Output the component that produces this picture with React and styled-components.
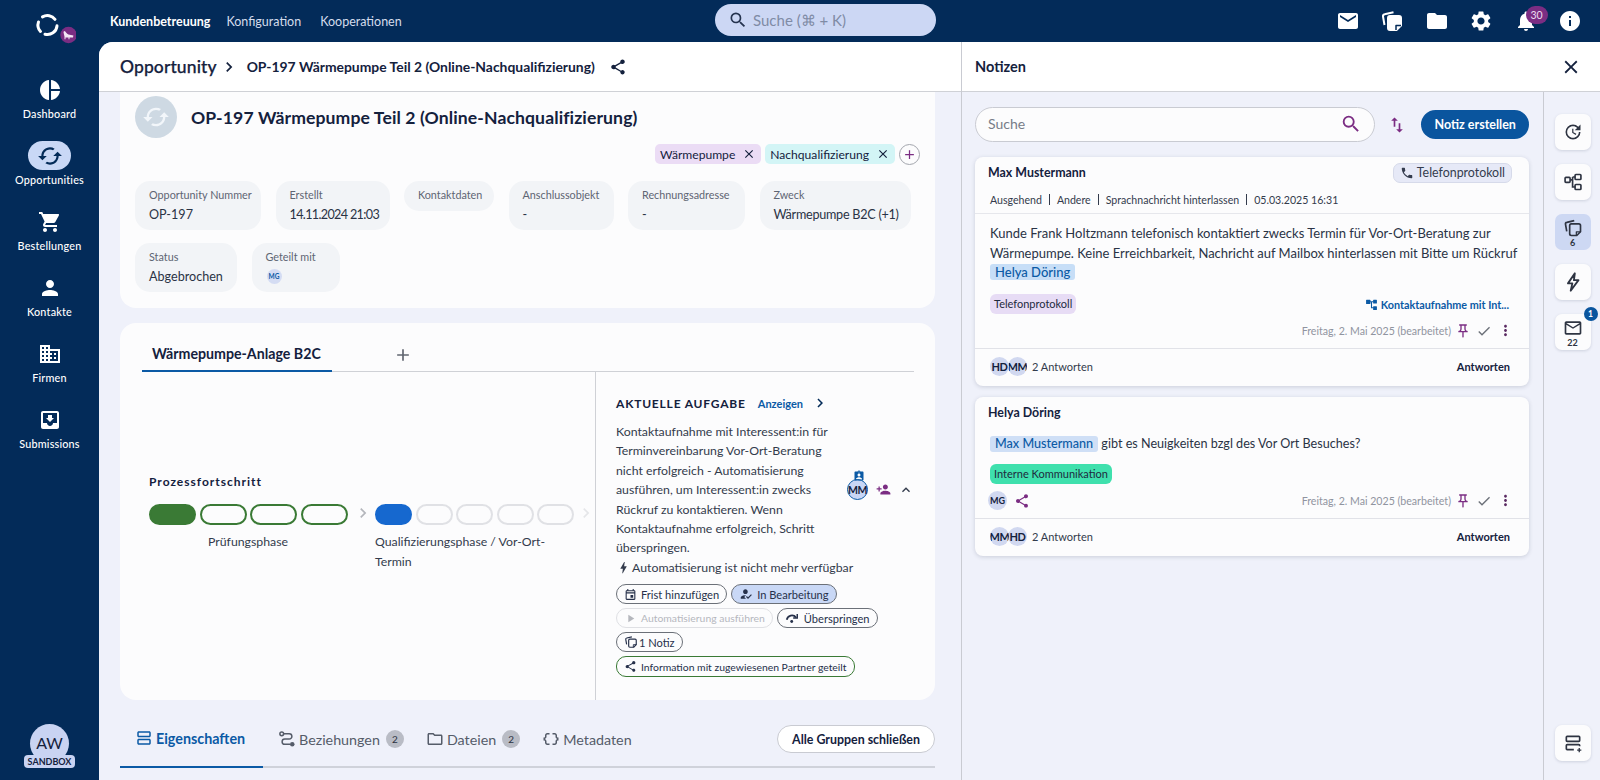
import React from "react";
import styled, { createGlobalStyle } from "styled-components";
import {
  MdPieChart, MdSync, MdShoppingCart, MdPerson, MdDomain, MdMoveToInbox, MdEmail, MdFolder,
  MdSettings, MdNotifications, MdInfo, MdShare, MdSearch, MdClose, MdAdd, MdChevronRight,
  MdSwapVert, MdPhone, MdOutlineUpdate, MdOutlineEmail, MdOutlineViewAgenda,
  MdOutlineFolder, MdDataObject, MdOutlineEvent, MdHowToReg, MdPlayArrow,
  MdOutlinePushPin, MdCheck, MdMoreVert, MdPersonAdd, MdAssignmentInd, MdExpandLess, MdBolt,
} from "react-icons/md";

const navy = "#032b59";
const ink = "#14213d";
const purple = "#7b2d83";
const blue = "#0b5aa5";

const GlobalStyle = createGlobalStyle`
  html, body {
    margin: 0;
    height: 780px;
    overflow: hidden;
    background: ${navy};
    font-family: "Lato", "Liberation Sans", sans-serif;
    color: ${ink};
  }
  * { box-sizing: border-box; }
`;

const Shell = styled.div`
  display: grid;
  grid-template-columns: 99px 1fr;
  width: 1600px;
  height: 780px;
  background: ${navy};
`;

const Sidebar = styled.aside`
  display: flex;
  flex-direction: column;
  align-items: center;
  height: 780px;
  color: #fff;
`;

const LogoBox = styled.div`
  height: 75px;
  padding-top: 9px;
`;

const NavItem = styled.div`
  display: flex;
  flex-direction: column;
  align-items: center;
  width: 99px;
  height: 66px;
  font-size: 10.8px;
  font-weight: 500;
  letter-spacing: 0.2px;
  color: #fff;
  svg { display: block; }
`;

const NavIcon = styled.div`
  display: flex;
  align-items: center;
  justify-content: center;
  width: 43px;
  height: 29px;
  margin-bottom: 3px;
  border-radius: 15px;
  background: ${(p) => (p.$active ? "#c9d8f6" : "transparent")};
  color: ${(p) => (p.$active ? navy : "#fff")};
`;

const SyncIcon = styled(MdSync)`
  transform: rotate(90deg);
`;

const UserBox = styled.div`
  position: relative;
  margin-top: auto;
  margin-bottom: 17px;
  width: 39px;
  height: 39px;
  border-radius: 50%;
  background: #c9d3f2;
  color: ${ink};
  font-size: 16px;
  display: flex;
  justify-content: center;
  padding-top: 10px;
  line-height: 18px;
`;

const SandboxBadge = styled.div`
  position: absolute;
  left: -6px;
  top: 31px;
  width: 51px;
  height: 13px;
  border-radius: 4px;
  background: #c9d3f2;
  font-size: 9px;
  font-weight: 700;
  line-height: 13px;
  text-align: center;
`;

const Main = styled.div`
  display: flex;
  flex-direction: column;
  min-width: 0;
  height: 780px;
`;

const TopBar = styled.header`
  display: grid;
  grid-template-columns: 605px 221px 1fr;
  align-items: center;
  height: 42px;
  padding-left: 11px;
  color: #fff;
`;

const TopLinks = styled.nav`
  display: flex;
  font-size: 12.5px;
`;

const TopLink = styled.span`
  margin-right: ${(p) => p.$mr || 0}px;
  font-weight: ${(p) => (p.$active ? 700 : 400)};
  color: ${(p) => (p.$active ? "#fff" : "#d4dcec")};
`;

const GlobalSearch = styled.div`
  display: flex;
  align-items: center;
  gap: 5px;
  height: 32px;
  margin-top: -2px;
  padding-left: 13px;
  border-radius: 16px;
  background: #ccd7f4;
  color: #7f8ba5;
  font-size: 15px;
  svg { color: #26344f; }
`;

const TopIcons = styled.div`
  display: flex;
  justify-content: flex-end;
  align-items: center;
  gap: 20.4px;
  padding-right: 18px;
  svg { display: block; }
`;

const BellWrap = styled.div`
  position: relative;
`;

const BellBadge = styled.span`
  position: absolute;
  left: 12px;
  top: -3px;
  width: 22px;
  height: 18px;
  border-radius: 9px;
  background: ${purple};
  font-size: 10.5px;
  line-height: 18px;
  text-align: center;
  color: #eadcf0;
`;

const Workspace = styled.div`
  display: grid;
  grid-template-columns: 863px 1fr;
  flex: 1;
  min-height: 0;
  overflow: hidden;
  border-top-left-radius: 14px;
  background: #eff1fa;
`;

const LeftPane = styled.section`
  display: flex;
  flex-direction: column;
  min-height: 0;
  border-right: 1px solid #c9cbd2;
`;

const PaneHead = styled.div`
  display: flex;
  align-items: center;
  flex: none;
  height: 50px;
  background: #fff;
  border-bottom: 1px solid #cfd1d6;
`;

const LeftHead = styled(PaneHead)`
  padding-left: 21px;
  svg { display: block; }
`;

const Crumb = styled.span`
  font-size: 17.5px;
  font-weight: 500;
  letter-spacing: 0.1px;
  -webkit-text-stroke: 0.25px ${ink};
`;

const CrumbArrow = styled(MdChevronRight)`
  margin: 0 8px 0 2px;
`;

const CrumbTitle = styled.span`
  font-size: 13.9px;
  font-weight: 700;
  margin-right: 14px;
`;

const LeftBody = styled.div`
  display: flex;
  flex-direction: column;
  padding: 0 26px 0 21px;
  background: #eff1fa;
`;

const Panel = styled.div`
  background: #fcfcfd;
  width: 815px;
`;

const InfoPanel = styled(Panel)`
  height: 216px;
  padding: 4px 15px 0;
  border-radius: 0 0 16px 16px;
`;

const TitleRow = styled.div`
  display: flex;
  align-items: center;
  gap: 14px;
  height: 42px;
`;

const EntityIcon = styled.div`
  display: flex;
  align-items: center;
  justify-content: center;
  width: 42px;
  height: 42px;
  border-radius: 50%;
  background: #ced9e3;
  color: #f2f6fa;
`;

const EntityTitle = styled.h1`
  margin: 0;
  font-size: 17.6px;
  font-weight: 700;
  letter-spacing: 0.1px;
`;

const TagRow = styled.div`
  display: flex;
  justify-content: flex-end;
  align-items: center;
  gap: 4px;
  height: 22px;
  margin-top: 5px;
`;

const Tag = styled.span`
  display: inline-flex;
  align-items: center;
  gap: 7px;
  height: 20px;
  padding: 0 5px;
  border-radius: 5px;
  font-size: 12.1px;
  background: ${(p) => p.$bg};
  svg { display: block; }
`;

const RoundAdd = styled.span`
  display: flex;
  align-items: center;
  justify-content: center;
  width: 21px;
  height: 21px;
  border: 1px solid #a3a6ad;
  border-radius: 50%;
  color: ${purple};
`;

const TileWrap = styled.div`
  display: flex;
  flex-wrap: wrap;
  gap: 13px 14.5px;
  margin-top: 16px;
`;

const Tile = styled.div`
  width: ${(p) => p.$w}px;
  height: ${(p) => (p.$short ? "30px" : "49px")};
  padding: 7px 14px 0;
  border-radius: 15px;
  background: #f2f4f7;
`;

const TileLabel = styled.div`
  font-size: 10.8px;
  line-height: 14px;
  color: #5e6573;
  white-space: nowrap;
`;

const TileValue = styled.div`
  margin-top: 5px;
  font-size: 12.6px;
  letter-spacing: ${(p) => p.$track || 0}px;
  line-height: 16px;
  color: #2a3345;
  white-space: nowrap;
`;

const TinyAvatar = styled.span`
  display: flex;
  align-items: center;
  justify-content: center;
  width: 15px;
  height: 15px;
  margin: 5px 0 0 1px;
  border-radius: 50%;
  background: #d4dcf3;
  color: ${blue};
  font-size: 6.5px;
  font-weight: 700;
`;

const ProcessPanel = styled(Panel)`
  height: 377px;
  margin-top: 15px;
  padding-top: 16px;
  border-radius: 16px;
`;

const TabLine = styled.div`
  display: flex;
  align-items: center;
  height: 33px;
  margin: 0 21px 0 22px;
  border-bottom: 1px solid #cfd1d6;
`;

const ProcessTab = styled.div`
  align-self: stretch;
  width: 190px;
  margin-bottom: -1px;
  padding: 6px 0 0 10px;
  border-bottom: 2px solid ${blue};
  font-size: 14.2px;
  font-weight: 700;
`;

const TabPlus = styled.span`
  display: flex;
  margin-left: 61px;
  color: #606570;
`;

const ProcessBody = styled.div`
  display: grid;
  grid-template-columns: 476px 1fr;
  height: 328px;
`;

const Progress = styled.div`
  display: flex;
  flex-direction: column;
  justify-content: flex-start;
  padding: 102px 0 0 29px;
  border-right: 1px solid #cfd1d6;
`;

const ProgressTitle = styled.div`
  font-size: 12px;
  font-weight: 700;
  letter-spacing: 1px;
  line-height: 16px;
`;

const Phases = styled.div`
  display: flex;
  margin-top: 14px;
`;

const Phase = styled.div`
  width: 198px;
`;

const PillRow = styled.div`
  display: flex;
  gap: ${(p) => p.$gap}px;
  height: 21px;
  align-items: center;
`;

const Pill = styled.span`
  flex: none;
  width: ${(p) => p.$w}px;
  height: 21px;
  border-radius: 10.5px;
  border: 2px solid ${(p) => p.$c};
  background: ${(p) => (p.$fill ? p.$c : "transparent")};
`;

const PhaseLabel = styled.div`
  margin-top: 7px;
  font-size: 12.3px;
  line-height: 19.5px;
  color: #333b4c;
  text-align: ${(p) => p.$align};
`;

const Chevron = styled.span`
  flex: none;
  align-self: flex-start;
  display: flex;
  color: ${(p) => p.$c};
  width: 20px;
  margin: -1px ${(p) => p.$mr || 0}px 0 ${(p) => p.$ml || 0}px;
`;

const Task = styled.div`
  position: relative;
  padding: 21px 0 0 20px;
`;

const TaskHead = styled.div`
  display: flex;
  align-items: center;
  height: 20px;
`;

const TaskTitle = styled.span`
  font-size: 12px;
  font-weight: 700;
  letter-spacing: 0.8px;
`;

const TaskLink = styled.span`
  margin: 0 8px 0 12px;
  font-size: 11px;
  font-weight: 700;
  color: ${blue};
`;

const TaskLine = styled.div`
  display: grid;
  grid-template-columns: 232px auto;
  align-items: center;
  margin-top: 9px;
`;

const TaskText = styled.div`
  font-size: 12.3px;
  line-height: 19.4px;
  color: #333b4c;
`;

const Assign = styled.div`
  display: flex;
  align-items: center;
  margin-left: -1px;
  color: ${purple};
  svg { display: block; }
`;

const AssignAvatar = styled.span`
  position: relative;
  display: flex;
  align-items: center;
  justify-content: center;
  width: 21px;
  height: 21px;
  margin-right: 8px;
  border: 1px solid ${blue};
  border-radius: 50%;
  background: #c9d6f5;
  color: ${ink};
  font-size: 10.5px;
  font-weight: 700;
  letter-spacing: -0.3px;
`;

const AssignBadge = styled.span`
  position: absolute;
  top: -10px;
  left: 5px;
  color: ${blue};
`;

const CollapseIcon = styled(MdExpandLess)`
  margin-left: 7px;
  color: #333b4c;
`;

const Automation = styled.div`
  display: flex;
  align-items: center;
  gap: 1px;
  font-size: 12.3px;
  line-height: 19.4px;
  color: #333b4c;
`;

const Actions = styled.div`
  display: flex;
  flex-wrap: wrap;
  gap: 4px;
  margin-top: 7px;
  width: 290px;
`;

const Action = styled.span`
  display: inline-flex;
  align-items: center;
  gap: ${(p) => p.$gap || 4}px;
  height: ${(p) => p.$h || 20}px;
  padding: 0 7px;
  border-radius: 10px;
  border: 1px solid ${(p) => p.$line || "#6b7078"};
  background: ${(p) => p.$bg || "transparent"};
  color: ${(p) => p.$c || "#26304a"};
  font-size: ${(p) => p.$fs || 11.1}px;
  white-space: nowrap;
  svg { display: block; }
`;

const BottomTabs = styled.div`
  display: flex;
  align-items: center;
  position: relative;
  height: 53px;
  margin-top: 15px;
  width: 815px;
  border-bottom: 2px solid #cfd2da;
`;

const BottomTab = styled.div`
  display: flex;
  align-items: center;
  gap: 3px;
  align-self: stretch;
  margin-bottom: -2px;
  margin-right: ${(p) => p.$mr}px;
  padding-left: ${(p) => p.$pl || 0}px;
  padding-bottom: 5px;
  width: ${(p) => (p.$active ? "143px" : "auto")};
  border-bottom: ${(p) => (p.$active ? `2px solid ${blue}` : "0")};
  font-size: 14.3px;
  font-weight: ${(p) => (p.$active ? 700 : 400)};
  color: ${(p) => (p.$active ? blue : "#555c69")};
  svg { display: block; }
`;

const Count = styled.span`
  display: flex;
  align-items: center;
  justify-content: center;
  width: 18px;
  height: 18px;
  margin-left: 3px;
  border-radius: 50%;
  background: #b9bcc5;
  color: #2c3342;
  font-size: 10px;
`;

const CloseGroups = styled.button`
  margin-left: auto;
  margin-bottom: 3px;
  width: 158px;
  height: 28px;
  border: 1px solid #c9cbd2;
  border-radius: 14px;
  background: #fff;
  color: ${ink};
  font: 700 12.4px "Lato", sans-serif;
`;

const NotesPane = styled.section`
  display: flex;
  flex-direction: column;
  min-height: 0;
`;

const NotesHead = styled(PaneHead)`
  justify-content: space-between;
  padding: 0 18px 0 13px;
  font-size: 14.5px;
  font-weight: 700;
`;

const NotesBody = styled.div`
  display: grid;
  grid-template-columns: 582px 1fr;
  flex: 1;
  min-height: 0;
`;

const NotesColumn = styled.div`
  display: flex;
  flex-direction: column;
  gap: 11px;
  padding: 15px 14px 0 13px;
  border-right: 1px solid #c9cbd2;
`;

const NotesTools = styled.div`
  display: flex;
  align-items: center;
  height: 35px;
  margin-bottom: 4px;
`;

const NoteSearch = styled.div`
  display: flex;
  align-items: center;
  justify-content: space-between;
  width: 402px;
  height: 35px;
  padding: 0 12px 2px;
  border: 1px solid #c9cbd2;
  border-radius: 18px;
  background: #fcfcfd;
  color: #777c88;
  font-size: 14px;
  svg { color: ${purple}; display: block; }
`;

const SortIcon = styled.span`
  display: flex;
  margin: 0 14px 0 12px;
  color: ${purple};
`;

const CreateNote = styled.button`
  width: 108px;
  height: 29px;
  border: 0;
  border-radius: 15px;
  background: #0a559e;
  color: #fff;
  font: 700 12.5px "Lato", sans-serif;
`;

const NoteCard = styled.article`
  flex: none;
  height: ${(p) => p.$h}px;
  border-radius: 8px;
  background: #fcfcfd;
  box-shadow: 0 1px 4px rgba(40, 50, 80, 0.18);
`;

const NoteHead = styled.div`
  display: flex;
  align-items: center;
  justify-content: space-between;
  height: 31px;
  padding: 0 17px 0 13px;
  font-size: 12.4px;
  font-weight: 700;
`;

const ProtocolChip = styled.span`
  display: inline-flex;
  align-items: center;
  gap: 3px;
  height: 20px;
  padding: 0 6px;
  border: 1px solid #d6daea;
  border-radius: 7px;
  background: #e6e9f7;
  font-size: 12.4px;
  font-weight: 400;
  color: #343c4e;
`;

const MetaRow = styled.div`
  display: flex;
  align-items: center;
  height: 26px;
  padding: 0 15px 2px;
  border-bottom: 1px solid #e6e7ec;
  font-size: 10.6px;
  color: #333b4c;
`;

const MetaSep = styled.i`
  width: 1px;
  height: 11px;
  margin: 0 7px;
  background: #333b4c;
`;

const NoteText = styled.div`
  padding: ${(p) => p.$pad || "10px 15px 0"};
  font-size: ${(p) => p.$fs || 13}px;
  line-height: 19.6px;
  color: #2a3345;
  white-space: nowrap;
`;

const Mention = styled.span`
  display: inline-block;
  height: 16px;
  padding: 0 5px;
  border-radius: 3px;
  background: ${(p) => p.$bg};
  color: ${blue};
  font-weight: 500;
  line-height: 16px;
`;

const NoteTagRow = styled.div`
  display: flex;
  align-items: center;
  justify-content: space-between;
  margin-top: ${(p) => p.$mt}px;
  padding: 0 20px 0 15px;
`;

const NoteTag = styled.span`
  display: inline-flex;
  align-items: center;
  height: 20px;
  padding: 0 4px;
  border-radius: 6px;
  background: ${(p) => p.$bg};
  font-size: 11px;
  color: #1e2a3e;
`;

const TaskRef = styled.span`
  display: inline-flex;
  align-items: center;
  gap: 3px;
  margin-top: 1px;
  font-size: 10.8px;
  font-weight: 700;
  color: ${blue};
  svg { display: block; }
`;

const StatusRow = styled.div`
  display: flex;
  align-items: center;
  height: 35px;
  padding: 0 15px 0 13px;
  border-bottom: 1px solid #e1e2e8;
  svg { display: block; }
`;

const StatusDate = styled.span`
  margin: 0 4px 0 auto;
  font-size: 10.6px;
  color: #9094a0;
`;

const StatusIcon = styled.span`
  display: flex;
  margin-left: ${(p) => p.$ml || 0}px;
  color: ${(p) => p.$c || "#6b7078"};
`;

const PersonDot = styled.span`
  display: flex;
  align-items: center;
  justify-content: center;
  width: 19px;
  height: 19px;
  border-radius: 50%;
  margin-right: 4px;
  background: #d1d8f0;
  font-size: 9px;
  font-weight: 700;
`;

const NoteFoot = styled.div`
  display: flex;
  align-items: center;
  height: 36px;
  padding: 0 19px 0 15px;
  font-size: 11px;
  color: #333b4c;
`;

const StackDot = styled.span`
  position: relative;
  z-index: ${(p) => (p.$front ? 1 : 0)};
  display: flex;
  align-items: center;
  justify-content: center;
  flex: none;
  width: 19px;
  height: 19px;
  margin-left: ${(p) => (p.$front ? 0 : -1)}px;
  margin-right: ${(p) => (p.$front ? 0 : 5)}px;
  border-radius: 50%;
  background: #d1d8f0;
  color: ${ink};
  font-size: 11px;
  font-weight: 700;
  letter-spacing: -0.3px;
  overflow: hidden;
`;

const ReplyLink = styled.span`
  margin-left: auto;
  font-weight: 700;
  color: ${ink};
`;

const Rail = styled.div`
  display: flex;
  flex-direction: column;
  align-items: center;
  gap: 14px;
  padding: 22px 0 19px 1px;
`;

const RailButton = styled.div`
  position: relative;
  display: flex;
  flex-direction: column;
  align-items: center;
  justify-content: center;
  flex: none;
  width: 36px;
  height: 36px;
  margin-top: ${(p) => (p.$bottom ? "auto" : "0")};
  border-radius: 7px;
  background: ${(p) => (p.$active ? "#cdd8f3" : "#fcfcfd")};
  box-shadow: ${(p) => (p.$active ? "none" : "0 1px 3px rgba(40,50,80,.16)")};
  color: #2e3442;
  font-size: 9px;
  line-height: 9px;
  font-weight: 700;
  svg { display: block; }
`;

const RailBadge = styled.span`
  position: absolute;
  top: -7px;
  right: -7px;
  width: 14px;
  height: 14px;
  border-radius: 50%;
  background: #0a559e;
  color: #fff;
  font-size: 8.5px;
  line-height: 14px;
  text-align: center;
`;

const Logo = () => (
  <svg width="52" height="40" viewBox="0 0 52 40">
    <g fill="none" stroke="#fff" strokeWidth="3" strokeLinecap="round">
      <path d="M18.500 7.900A9.500 9.500 0 0 1 31 10.300" />
      <path d="M33 16.800A9.500 9.500 0 0 1 21 25.200" />
      <path d="M16.500 22.500A9.500 9.500 0 0 1 14.500 13" />
    </g>
    <circle cx="44.500" cy="26" r="8.200" fill={purple} />
    <path d="M40 22c2 .3 2.600 3 4.400 3.600l5 1-.4 1.900h-3.500v1.800h-1v-1.800h-3v1.800h-1v-2.500l-1-4.500z" fill="#f4e6f5" />
  </svg>
);

const NotesGlyph = ({ filled, size = 22 }) => (
  <svg width={size} height={size} viewBox="0 0 24 24" fill="none" stroke="currentColor" strokeWidth="2" strokeLinejoin="round">
    <path d="M4.500 16L3 7.500A2 2 0 0 1 4.600 5.200L13.500 3.200" />
    <path
      d="M10 7h9a2 2 0 0 1 2 2v7.500L16.500 21H10a2 2 0 0 1-2-2V9a2 2 0 0 1 2-2z"
      fill={filled ? "currentColor" : "none"}
    />
    <path d="M16 21v-4.500h5" stroke={filled ? navy : "currentColor"} strokeWidth="1.500" />
  </svg>
);

const BranchGlyph = ({ size = 22 }) => (
  <svg width={size} height={size} viewBox="0 0 24 24" fill="none" stroke="currentColor" strokeWidth="2">
    <rect x="2.500" y="6.500" width="6" height="6" rx="1" />
    <rect x="14.500" y="3" width="7" height="6" rx="1" />
    <rect x="14.500" y="15" width="7" height="6" rx="1" />
    <path d="M8.500 9.500h3M11.500 6v12h3M11.500 6h3" />
  </svg>
);

const TaskRefGlyph = () => (
  <svg width="13" height="13" viewBox="0 0 24 24" fill="currentColor">
    <rect x="2" y="3" width="8" height="8" rx="1" />
    <rect x="15" y="3" width="7" height="7" rx="1" />
    <rect x="15" y="15" width="7" height="7" rx="1" />
    <path d="M9 6h7v2H13v9h3v2h-5V8H9z" />
  </svg>
);

const SkipGlyph = () => (
  <svg width="14" height="14" viewBox="0 0 24 24" fill="none" stroke="currentColor" strokeWidth="3">
    <path d="M3 15a9 9 0 0 1 16-4" />
    <path d="M21 5v7h-7" strokeWidth="2.500" />
    <circle cx="11.500" cy="18" r="2.500" fill="currentColor" stroke="none" />
  </svg>
);

const RouteGlyph = () => (
  <svg width="18" height="18" viewBox="0 0 24 24" fill="none" stroke="currentColor" strokeWidth="2">
    <circle cx="5" cy="5" r="2.500" />
    <path d="M7.500 5H15a3.500 3.500 0 0 1 0 7H9a3.500 3.500 0 0 0 0 7h7" />
    <circle cx="19" cy="19" r="3" fill="currentColor" stroke="none" />
  </svg>
);

const GroupAddGlyph = () => (
  <svg width="20" height="20" viewBox="0 0 24 24" fill="none" stroke="currentColor" strokeWidth="2">
    <rect x="4" y="4" width="16" height="6" rx="1" />
    <path d="M13 20H5a1 1 0 0 1-1-1v-4a1 1 0 0 1 1-1h14a1 1 0 0 1 1 1v1" />
    <path d="M19.500 18v5M17 20.500h5" strokeWidth="1.600" />
  </svg>
);

const BoltGlyph = () => (
  <svg width="22" height="22" viewBox="0 0 24 24" fill="none" stroke="currentColor" strokeWidth="2" strokeLinejoin="round">
    <path d="M14 2.500L6.500 13.500h4.800L9.500 21.500L18 10h-5L14 2.500z" />
  </svg>
);

const navItems = [
  { label: "Dashboard", Icon: MdPieChart },
  { label: "Opportunities", Icon: SyncIcon, active: true },
  { label: "Bestellungen", Icon: MdShoppingCart },
  { label: "Kontakte", Icon: MdPerson },
  { label: "Firmen", Icon: MdDomain },
  { label: "Submissions", Icon: MdMoveToInbox },
];

const tiles = [
  { label: "Opportunity Nummer", value: "OP-197", w: 126 },
  { label: "Erstellt", value: "14.11.2024 21:03", w: 114, track: -0.65 },
  { label: "Kontaktdaten", w: 90 },
  { label: "Anschlussobjekt", value: "-", w: 105 },
  { label: "Rechnungsadresse", value: "-", w: 117 },
  { label: "Zweck", value: "Wärmepumpe B2C (+1)", w: 151, track: -0.25 },
  { label: "Status", value: "Abgebrochen", w: 102 },
  { label: "Geteilt mit", avatar: "MG", w: 88 },
];

const taskLines = `Kontaktaufnahme mit Interessent:in für
Terminvereinbarung Vor-Ort-Beratung
nicht erfolgreich - Automatisierung
ausführen, um Interessent:in zwecks
Rückruf zu kontaktieren. Wenn
Kontaktaufnahme erfolgreich, Schritt
überspringen.`.split("\n");

const NoteStatus = ({ children }) => (
  <StatusRow>
    {children}
    <StatusDate>Freitag, 2. Mai 2025 (bearbeitet)</StatusDate>
    <StatusIcon $c={purple}><MdOutlinePushPin size={16} /></StatusIcon>
    <StatusIcon $ml={5}><MdCheck size={16} /></StatusIcon>
    <StatusIcon $c="#5a2a62" $ml={5}><MdMoreVert size={17} /></StatusIcon>
  </StatusRow>
);

const NoteFooter = ({ first, second }) => (
  <NoteFoot>
    <StackDot $front>{first}</StackDot>
    <StackDot>{second}</StackDot>
    2 Antworten
    <ReplyLink>Antworten</ReplyLink>
  </NoteFoot>
);

export default function App() {
  return (
    <Shell>
      <GlobalStyle />
      <Sidebar>
        <LogoBox><Logo /></LogoBox>
        {navItems.map(({ label, Icon, active }) => (
          <NavItem key={label}>
            <NavIcon $active={active}><Icon size={active ? 26 : 24} /></NavIcon>
            {label}
          </NavItem>
        ))}
        <UserBox>
          AW
          <SandboxBadge>SANDBOX</SandboxBadge>
        </UserBox>
      </Sidebar>

      <Main>
        <TopBar>
          <TopLinks>
            <TopLink $active $mr={16}>Kundenbetreuung</TopLink>
            <TopLink $mr={19}>Konfiguration</TopLink>
            <TopLink>Kooperationen</TopLink>
          </TopLinks>
          <GlobalSearch><MdSearch size={20} />Suche (⌘ + K)</GlobalSearch>
          <TopIcons>
            <MdEmail size={24} />
            <NotesGlyph filled size={24} />
            <MdFolder size={24} />
            <MdSettings size={24} />
            <BellWrap>
              <MdNotifications size={24} />
              <BellBadge>30</BellBadge>
            </BellWrap>
            <MdInfo size={24} />
          </TopIcons>
        </TopBar>

        <Workspace>
          <LeftPane>
            <LeftHead>
              <Crumb>Opportunity</Crumb>
              <CrumbArrow size={20} />
              <CrumbTitle>OP-197 Wärmepumpe Teil 2 (Online-Nachqualifizierung)</CrumbTitle>
              <MdShare size={18} />
            </LeftHead>
            <LeftBody>
              <InfoPanel>
                <TitleRow>
                  <EntityIcon><SyncIcon size={28} /></EntityIcon>
                  <EntityTitle>OP-197 Wärmepumpe Teil 2 (Online-Nachqualifizierung)</EntityTitle>
                </TitleRow>
                <TagRow>
                  <Tag $bg="#ebdcf5">Wärmepumpe <MdClose size={14} /></Tag>
                  <Tag $bg="#d3f5f6">Nachqualifizierung <MdClose size={14} /></Tag>
                  <RoundAdd><MdAdd size={15} /></RoundAdd>
                </TagRow>
                <TileWrap>
                  {tiles.map((t) => (
                    <Tile key={t.label} $short={!t.value && !t.avatar} $w={t.w}>
                      <TileLabel>{t.label}</TileLabel>
                      {t.value && <TileValue $track={t.track}>{t.value}</TileValue>}
                      {t.avatar && <TinyAvatar>{t.avatar}</TinyAvatar>}
                    </Tile>
                  ))}
                </TileWrap>
              </InfoPanel>

              <ProcessPanel>
                <TabLine>
                  <ProcessTab>Wärmepumpe-Anlage B2C</ProcessTab>
                  <TabPlus><MdAdd size={20} /></TabPlus>
                </TabLine>
                <ProcessBody>
                  <Progress>
                    <ProgressTitle>Prozessfortschritt</ProgressTitle>
                    <Phases>
                      <Phase>
                        <PillRow $gap={3.7}>
                          <Pill $w={47} $c="#3a7a35" $fill />
                          <Pill $w={47} $c="#3a7a35" />
                          <Pill $w={47} $c="#3a7a35" />
                          <Pill $w={47} $c="#3a7a35" />
                        </PillRow>
                        <PhaseLabel $align="center">Prüfungsphase</PhaseLabel>
                      </Phase>
                      <Chevron $c="#b4b6bc" $ml={6} $mr={2}><MdChevronRight size={20} /></Chevron>
                      <Phase>
                        <PillRow $gap={3.5}>
                          <Pill $w={37} $c="#1668cf" $fill />
                          <Pill $w={37} $c="#e0e1e5" />
                          <Pill $w={37} $c="#e0e1e5" />
                          <Pill $w={37} $c="#e0e1e5" />
                          <Pill $w={37} $c="#e0e1e5" />
                        </PillRow>
                        <PhaseLabel $align="left">Qualifizierungsphase / Vor-Ort-Termin</PhaseLabel>
                      </Phase>
                      <Chevron $c="#e5e6e9" $ml={3}><MdChevronRight size={20} /></Chevron>
                    </Phases>
                  </Progress>
                  <Task>
                    <TaskHead>
                      <TaskTitle>AKTUELLE AUFGABE</TaskTitle>
                      <TaskLink>Anzeigen</TaskLink>
                      <MdChevronRight size={18} color={navy} />
                    </TaskHead>
                    <TaskLine>
                      <TaskText>
                        {taskLines.map((l) => <div key={l}>{l}</div>)}
                      </TaskText>
                      <Assign>
                        <AssignAvatar>
                          MM
                          <AssignBadge><MdAssignmentInd size={12} /></AssignBadge>
                        </AssignAvatar>
                        <MdPersonAdd size={15} />
                        <CollapseIcon size={16} />
                      </Assign>
                    </TaskLine>
                    <Automation><MdBolt size={15} />Automatisierung ist nicht mehr verfügbar</Automation>
                    <Actions>
                      <Action><MdOutlineEvent size={13} />Frist hinzufügen</Action>
                      <Action $bg="#c9d8f6"><MdHowToReg size={14} />In Bearbeitung</Action>
                      <Action $line="#dfe0e4" $c="#b5b7bd" $fs={10.4}><MdPlayArrow size={13} />Automatisierung ausführen</Action>
                      <Action $gap={5}><SkipGlyph />Überspringen</Action>
                      <Action $gap={1}><NotesGlyph size={14} />1 Notiz</Action>
                      <Action $line="#3a7a35" $h={21} $fs={10.4} $gap={4}><MdShare size={13} />Information mit zugewiesenen Partner geteilt</Action>
                    </Actions>
                  </Task>
                </ProcessBody>
              </ProcessPanel>

              <BottomTabs>
                <BottomTab $active $pl={15} $mr={15}><MdOutlineViewAgenda size={18} />Eigenschaften</BottomTab>
                <BottomTab $mr={22}><RouteGlyph />Beziehungen<Count>2</Count></BottomTab>
                <BottomTab $mr={22}><MdOutlineFolder size={18} />Dateien<Count>2</Count></BottomTab>
                <BottomTab $mr={0}><MdDataObject size={18} />Metadaten</BottomTab>
                <CloseGroups>Alle Gruppen schließen</CloseGroups>
              </BottomTabs>
            </LeftBody>
          </LeftPane>

          <NotesPane>
            <NotesHead>Notizen<MdClose size={22} /></NotesHead>
            <NotesBody>
              <NotesColumn>
                <NotesTools>
                  <NoteSearch>Suche<MdSearch size={22} /></NoteSearch>
                  <SortIcon><MdSwapVert size={20} /></SortIcon>
                  <CreateNote>Notiz erstellen</CreateNote>
                </NotesTools>

                <NoteCard $h={229}>
                  <NoteHead>
                    Max Mustermann
                    <ProtocolChip><MdPhone size={14} />Telefonprotokoll</ProtocolChip>
                  </NoteHead>
                  <MetaRow>
                    Ausgehend<MetaSep />Andere<MetaSep />Sprachnachricht hinterlassen<MetaSep />05.03.2025 16:31
                  </MetaRow>
                  <NoteText>
                    Kunde Frank Holtzmann telefonisch kontaktiert zwecks Termin für Vor-Ort-Beratung zur<br />
                    Wärmepumpe. Keine Erreichbarkeit, Nachricht auf Mailbox hinterlassen mit Bitte um Rückruf<br />
                    <Mention $bg="#c7def7">Helya Döring</Mention>
                  </NoteText>
                  <NoteTagRow $mt={11}>
                    <NoteTag $bg="#e7dcf5">Telefonprotokoll</NoteTag>
                    <TaskRef><TaskRefGlyph />Kontaktaufnahme mit Int...</TaskRef>
                  </NoteTagRow>
                  <NoteStatus />
                  <NoteFooter first="HD" second="MM" />
                </NoteCard>

                <NoteCard $h={159}>
                  <NoteHead>Helya Döring</NoteHead>
                  <NoteText $pad="6px 15px 0" $fs={12.6}><Mention $bg="#cfdff6">Max Mustermann</Mention> gibt es Neuigkeiten bzgl des Vor Ort Besuches?</NoteText>
                  <NoteTagRow $mt={10}>
                    <NoteTag $bg="#3fe0ad">Interne Kommunikation</NoteTag>
                  </NoteTagRow>
                  <NoteStatus>
                    <PersonDot>MG</PersonDot>
                    <StatusIcon $c={purple} $ml={3}><MdShare size={16} /></StatusIcon>
                  </NoteStatus>
                  <NoteFooter first="MM" second="HD" />
                </NoteCard>
              </NotesColumn>

              <Rail>
                <RailButton><MdOutlineUpdate size={20} /></RailButton>
                <RailButton><BranchGlyph size={20} /></RailButton>
                <RailButton $active><NotesGlyph size={20} />6</RailButton>
                <RailButton><BoltGlyph /></RailButton>
                <RailButton><MdOutlineEmail size={20} />22<RailBadge>1</RailBadge></RailButton>
                <RailButton $bottom><GroupAddGlyph /></RailButton>
              </Rail>
            </NotesBody>
          </NotesPane>
        </Workspace>
      </Main>
    </Shell>
  );
}
